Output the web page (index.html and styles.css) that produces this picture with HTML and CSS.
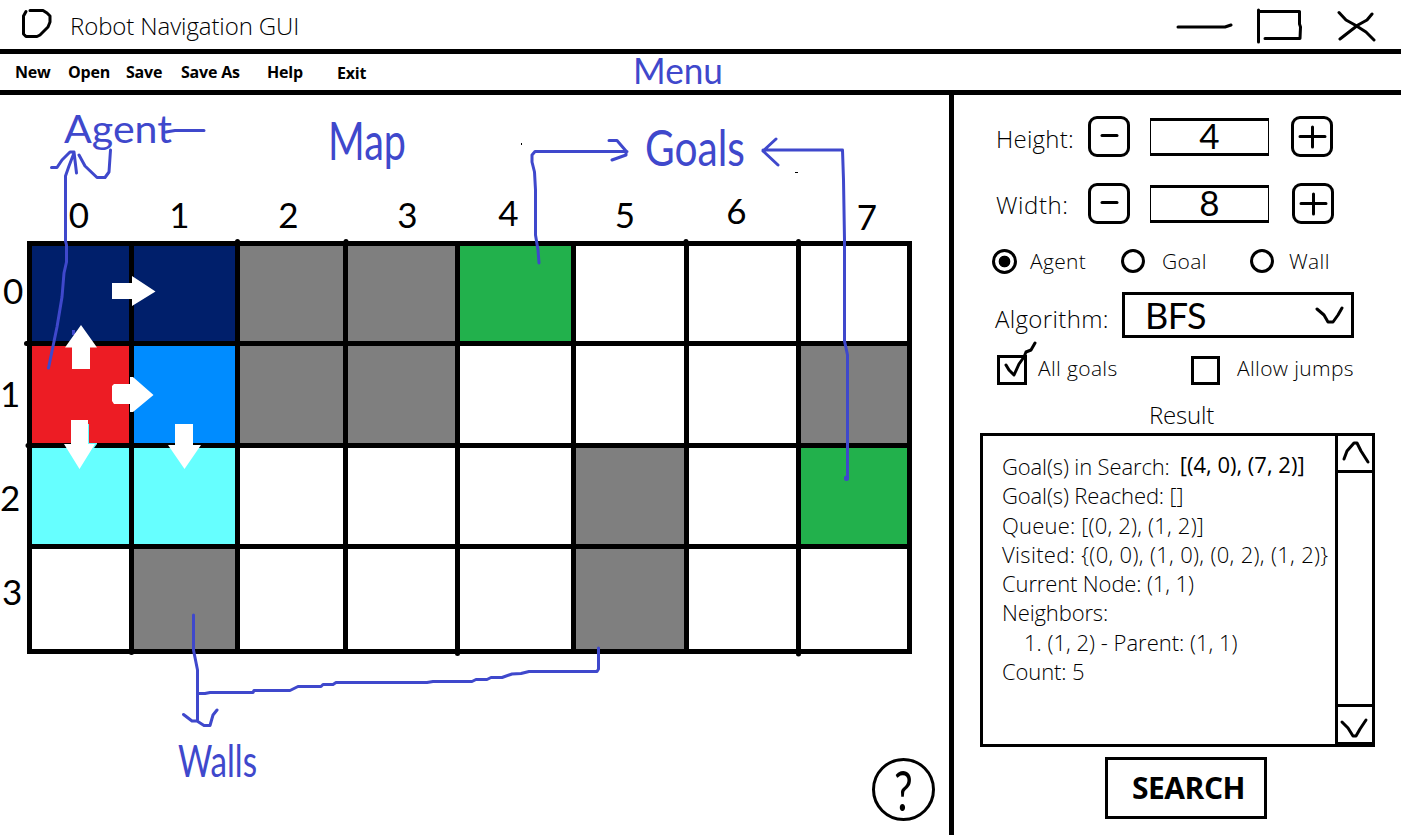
FILE: index.html
```html
<!DOCTYPE html>
<html lang="en">
<head>
<meta charset="utf-8">
<title>Robot Navigation GUI</title>
<link rel="stylesheet" href="styles.css">
</head>
<body>
<div class="window">
  <header class="titlebar">
    <svg class="logo" width="32" height="32" viewBox="20 6 32 32"><path d="M30 7.500H43L47 10L50 13V19L48 24L40 32L37 33.500H26L23.500 31V13L26 8.500"/></svg>
    <h1 class="title"><span class="fit">Robot Navigation GUI</span></h1>
    <svg class="controls" width="206" height="44" viewBox="1174 2 206 44">
      <path d="M1178 26H1225L1231 24M1258.500 9V41M1260 10.500H1299.500V23L1300.500 26L1300 37.500H1265M1339 11.500L1346 19L1355 24L1366 31L1374 39M1340 38L1358 24L1367 19L1372 13"/>
    </svg>
  </header>
  <nav class="menubar">
    <a class="m-new">New</a><a class="m-open">Open</a><a class="m-save">Save</a><a class="m-saveas">Save As</a><a class="m-help">Help</a><a class="m-exit">Exit</a>
  </nav>
  <main class="main">
    <section class="map">
      <div class="cols"><span class="c0">0</span><span class="c1">1</span><span class="c2">2</span><span class="c3">3</span><span class="c4">4</span><span class="c5">5</span><span class="c6">6</span><span class="c7">7</span></div>
      <div class="board">
        <div class="rows"><span>0</span><span class="r1">1</span><span class="r2">2</span><span class="r3">3</span></div>
        <div class="grid">
          <i class="navy"></i><i class="navy"></i><i class="wall"></i><i class="wall"></i><i class="goal"></i><i></i><i></i><i></i>
          <i class="agent"></i><i class="current"></i><i class="wall"></i><i class="wall"></i><i></i><i></i><i></i><i class="wall"></i>
          <i class="queued"></i><i class="queued"></i><i></i><i></i><i></i><i class="wall"></i><i></i><i class="goal"></i>
          <i></i><i class="wall"></i><i></i><i></i><i></i><i class="wall"></i><i></i><i></i>
        </div>
      </div>
      <button class="help"><span>?</span></button>
    </section>
    <aside class="panel">
      <div class="stepper">
        <label class="lab"><span class="fit">Height:</span></label>
        <button class="step"><svg width="36" height="35"><path d="M11 16.500H26"/></svg></button>
        <output class="field">4</output>
        <button class="step"><svg width="36" height="35"><path d="M6 17.500H31M18.500 8V28"/></svg></button>
      </div>
      <div class="stepper second">
        <label class="lab"><span class="fit">Width:</span></label>
        <button class="step"><svg width="36" height="35"><path d="M11 16.500H26"/></svg></button>
        <output class="field">8</output>
        <button class="step plus2"><svg width="36" height="35"><path d="M6 17.500H31M18.500 8V28"/></svg></button>
      </div>
      <div class="radios">
        <span class="radio on"></span><label class="small l-agent"><span class="fit">Agent</span></label>
        <span class="radio"></span><label class="small l-goal"><span class="fit">Goal</span></label>
        <span class="radio"></span><label class="small l-wall"><span class="fit">Wall</span></label>
      </div>
      <div class="algo">
        <label class="lab"><span class="fit">Algorithm:</span></label>
        <div class="select"><span>BFS</span><svg width="30" height="20" viewBox="1314 305 30 20"><path d="M1317 309L1324 315L1328 322H1333L1338 315L1342 308"/></svg></div>
      </div>
      <div class="checks">
        <span class="box"></span><label class="small l-all"><span class="fit">All goals</span></label>
        <span class="box b2"></span><label class="small l-jumps"><span class="fit">Allow jumps</span></label>
      </div>
      <h2 class="rtitle"><span class="fit">Result</span></h2>
      <div class="result">
        <div class="log">
          <p class="snug"><span class="fit">Goal(s) in Search:</span><b class="found">[(4, 0), (7, 2)]</b></p>
          <p class="snug"><span class="fit">Goal(s) Reached: []</span></p>
          <p class="airy"><span class="fit">Queue: [(0, 2), (1, 2)]</span></p>
          <p class="wide"><span class="fit">Visited: {(0, 0), (1, 0), (0, 2), (1, 2)}</span></p>
          <p class="snug"><span class="fit">Current Node: (1, 1)</span></p>
          <p class="snug"><span class="fit">Neighbors:</span></p>
          <p class="indent"><span class="fit">1. (1, 2) - Parent: (1, 1)</span></p>
          <p class="snug"><span class="fit">Count: 5</span></p>
        </div>
        <div class="scroll">
          <svg class="up" width="34" height="34" viewBox="1339 437 34 34"><path d="M1345 460L1348 452L1355 444H1358L1362 452L1369 463"/></svg>
          <svg class="down" width="34" height="35" viewBox="1339 707 34 35"><path d="M1343 722L1349 728L1354 736H1357L1361 729L1367 720"/></svg>
        </div>
      </div>
      <button class="search"><span class="fit">SEARCH</span></button>
    </aside>
  </main>
  <svg class="notes" width="1401" height="835" viewBox="0 0 1401 835">
    <!-- grid line overshoots and stray dots -->
    <g class="ink">
      <path d="M237.500 242V241.500M346 242V241.500M686 242V241.500M798.500 242V241.500M27 343.500H26.500M28.500 445.500H28M131.500 652V652.500M457.500 653V653.500M798.500 653V654"/>
    </g>
    <path d="M521 143h1v2h-1zM795 172h3v1h-3z"/>
    <!-- search direction arrows -->
    <path class="cyan" d="M88 424h1v19h8v1l-3 4h-6z"/>
    <path class="blue" d="M72 330h3v5h-3z"/>
    <g class="arrow">
      <path d="M112 283h20v-7l23.500 15.500L132 306v-7h-20z"/>
      <path d="M81 325L97 347.500h-7V369H72V347.500H65z"/>
      <path d="M114 384h16v-7h3l20.500 18L133 412h-3v-8h-16l-2-3v-15z"/>
      <path d="M71 420h17v24h7L79.500 469 64 444h7z"/>
      <path d="M175 424h18v21h8L184.500 469 168 445h7z"/>
    </g>
    <!-- callout lines -->
    <g class="pen">
      <path d="M48.500 368L51 356L57 327L62 297L64 273L66.500 262V245L65.500 241V176L69 166L74 153M51.500 167.500H57L62 160L70 152L74 152L76.500 173M79 155L85 166L97 177.500H105L109 172L110.500 150"/>
      <path d="M166 132L175 130.500H204"/>
      <path d="M539 263L538 250L535.500 235V190L534.500 172L532 162V155L535 151.500H627M609 140.500H617L626 151V155L612 160"/>
      <path d="M847.500 478V355L844.500 341V240L843.500 180L842.500 150H763M776 139L763 151L778 165"/>
      <path class="dot" d="M846.500 478V478.500"/>
      <path d="M193.500 615V650L197.500 670V720M198 693.500H205L210 692.500H253L254 690.500H290L298 686.500H321L323 684.500H333L336 682.500H427L433 681.500H472L476 679.500H487L491 677.500H502L512 674L521 673.500L529 671.500H597L598.500 669V648M183.500 714.500L192 721H197L204 725.500H210L213 715L217 710"/>
    </g>
    <g class="words">
      <text x="633" y="84" font-size="36" textLength="90" lengthAdjust="spacingAndGlyphs">Menu</text>
      <text x="64" y="143" font-size="38" textLength="108" lengthAdjust="spacingAndGlyphs">Agent</text>
      <text x="328" y="160" font-size="52" textLength="78" lengthAdjust="spacingAndGlyphs">Map</text>
      <text x="645" y="166" font-size="50" textLength="100" lengthAdjust="spacingAndGlyphs">Goals</text>
      <text x="178" y="777" font-size="44" textLength="79" lengthAdjust="spacingAndGlyphs">Walls</text>
    </g>
    <path class="tick" d="M1006 365L1009 370L1014 375L1019 364L1024 357L1026 352L1031 350L1035 343"/>
  </svg>
</div>
</body>
</html>
```
FILE: styles.css
```css
* { box-sizing: border-box; }
body { margin: 0; background: #fff; color: #000; font-family: "Open Sans", sans-serif; overflow: hidden; }
button { background: #fff; color: #000; padding: 0; font-family: inherit; }
svg { display: block; flex: none; }
h1, h2, p { margin: 0; font-weight: 300; }
.fit { display: inline-block; white-space: nowrap; }
.window { position: relative; width: 1401px; height: 835px; overflow: hidden; display: flex; flex-direction: column; }
.titlebar { height: 54px; border-bottom: 5px solid #000; display: flex; align-items: center; padding-left: 20px; flex: none; }
.logo, .controls { fill: none; stroke: #000; stroke-width: 3; stroke-linecap: round; stroke-linejoin: round; }
.title { font-size: 24px; line-height: 49px; margin: 1px 0 0 18px; height: 49px; letter-spacing: -0.1px; }
.controls { margin-left: auto; margin-right: 21px; }
.menubar { height: 41px; border-bottom: 5px solid #000; display: flex; padding-left: 15px; font-size: 16px; font-weight: 700; line-height: 36px; flex: none; white-space: nowrap; letter-spacing: -0.2px; }
.m-new { width: 53px; } .m-open { width: 58px; } .m-save { width: 55px; } .m-saveas { width: 86px; } .m-help { width: 70px; } .m-exit { padding-top: 1px; }
.main { display: flex; height: 740px; }
.map { width: 949px; display: flex; flex-direction: column; }
.cols { display: grid; grid-template-columns: 97px 101px 103px 107px 111px 108px 107px 106px; gap: 5px; padding: 99px 0 0 32px; height: 146px; text-align: center; font: 400 35px/40px Lato, sans-serif; }
.c0 { margin-right: 3px; } .c1 { margin-right: 10px; } .c2 { margin-right: 6px; } .c3 { margin-left: 12px; } .c4 { margin-right: 14px; margin-top: -2px; } .c5 { margin-right: 10px; } .c6 { margin-right: 12px; margin-top: -4px; } .c7 { margin-left: 26px; margin-top: 2px; }
.board { display: flex; height: 413px; }
.rows { width: 27px; display: grid; grid-template-rows: 100px 102px 101px 110px; font: 400 35px/98px Lato, sans-serif; }
.rows span { padding-left: 3px; } .rows .r1 { padding-left: 0; line-height: 105px; } .rows .r2 { padding-left: 0; line-height: 108px; } .rows .r3 { padding-left: 2px; line-height: 94px; }
.grid { width: 885px; display: grid; grid-template-columns: 97px 101px 103px 107px 111px 108px 107px 106px; grid-template-rows: 95px 97px 96px 100px; gap: 5px; padding: 5px; background: #000; }
.grid i { background: #fff; }
.grid .navy { background: #001f6b; } .grid .wall { background: #7f7f7f; } .grid .goal { background: #22b14c; } .grid .agent { background: #ed1c24; } .grid .current { background: #008cff; } .grid .queued { background: #66ffff; }
.help { width: 63px; height: 63px; border: 3px solid #000; border-radius: 50%; margin: 104px 0 0 872px; font: 400 56px/57px Lato, sans-serif; }
.help span { display: block; transform: scaleX(.75); }
.panel { width: 452px; border-left: 5px solid #000; padding: 21px 0 0 26px; }
.lab { display: block; font-size: 24px; font-weight: 300; letter-spacing: 0.25px; }
.stepper { display: flex; height: 41px; padding-left: 16px; align-items: center; }
.stepper .lab { width: 92px; padding-top: 3px; }
.second { margin-top: 26px; } .second .lab { padding-top: 1px; letter-spacing: 0.6px; }
.step { width: 42px; height: 41px; border: 3px solid #000; border-radius: 9px; flex: none; }
.plus2 { margin-left: 1px; }
.step path, .select path, .scroll path, .tick { fill: none; stroke: #000; stroke-width: 3; stroke-linecap: round; stroke-linejoin: round; }
.field { width: 119px; height: 38px; border: solid #000; border-width: 3px 1px; margin: 0 22px 0 20px; text-align: center; font: 400 35px/28px Lato, sans-serif; }
.radios { display: flex; height: 26px; margin-top: 24px; padding-left: 12px; align-items: center; }
.radio { width: 24px; height: 24px; border: 3px solid #000; border-radius: 50%; flex: none; }
.radio.on { background: radial-gradient(circle, #000 5.500px, #fff 6.200px); width: 25px; height: 25px; }
.small { font-size: 21px; font-weight: 300; line-height: 26px; letter-spacing: 0.35px; }
.l-agent { width: 104px; padding-left: 13px; } .l-goal { width: 105px; padding-left: 17px; } .l-wall { padding-left: 15px; }
.algo { display: flex; margin-top: 18px; height: 46px; padding-left: 15px; }
.algo .lab { width: 127px; line-height: 54px; letter-spacing: 0.35px; }
.select { width: 232px; height: 46px; border: 3px solid #000; display: flex; align-items: center; justify-content: space-between; padding: 0 7px 0 20px; font: 400 36px/40px Lato, sans-serif; }
.select span { letter-spacing: -0.5px; }
.checks { display: flex; height: 30px; margin-top: 17px; padding-left: 17px; align-items: center; }
.checks .small { margin-top: -4px; }
.box { width: 30px; height: 30px; border: 3px solid #000; flex: none; }
.b2 { width: 29px; height: 29px; }
.l-all { width: 164px; padding-left: 11px; } .l-jumps { padding-left: 17px; }
.rtitle { font-size: 24px; line-height: 32px; padding-left: 169px; margin: 14px 0 0; height: 34px; letter-spacing: -0.2px; }
.result { width: 395px; height: 314px; border: 3px solid #000; display: flex; }
.log { flex: 1; width: 0; padding: 16px 0 0 19px; font-size: 22px; line-height: 29.300px; }
.log p { height: 29.300px; display: flex; white-space: pre; }
.log .snug { letter-spacing: -0.13px; }
.log .airy { letter-spacing: 0.2px; }
.log .wide { letter-spacing: 0.32px; }
.found { font-weight: 400; margin: -2px 0 0 10px; letter-spacing: 0; }
.indent { padding-left: 22px; }
.scroll { width: 37px; flex: none; border-left: 3px solid #000; display: flex; flex-direction: column; justify-content: space-between; }
.up { border-bottom: 3px solid #000; height: 37px; }
.down { border-top: 3px solid #000; border-bottom: 2px solid #000; height: 40px; }
.search { display: block; width: 162px; height: 62px; border: 3px solid #000; margin: 10px 0 0 125px; padding-left: 5px; font-size: 30px; font-weight: 700; line-height: 56px; letter-spacing: -0.5px; }
.notes { position: absolute; left: 0; top: 0; pointer-events: none; }
.ink path { fill: none; stroke: #000; stroke-width: 5; stroke-linecap: round; }
.arrow { fill: #fff; } .cyan { fill: #66ffff; } .blue { fill: #3f48cc; }
.pen path { fill: none; stroke: #3f48cc; stroke-width: 3; stroke-linecap: round; stroke-linejoin: round; }
.pen .dot { stroke-width: 5; }
.words { fill: #3f48cc; font-family: Lato, sans-serif; font-weight: 400; }
```
